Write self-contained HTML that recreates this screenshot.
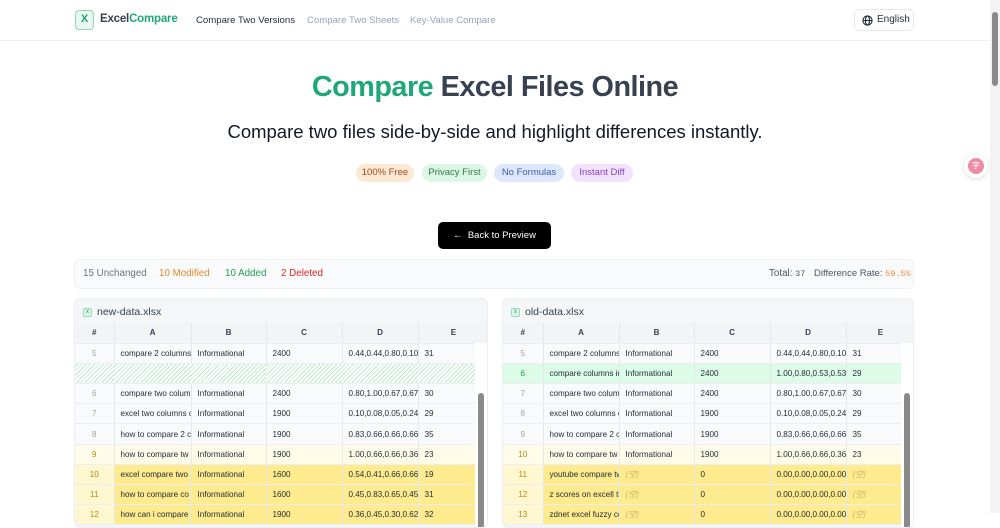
<!DOCTYPE html>
<html><head><meta charset="utf-8"><style>
*{box-sizing:border-box;margin:0;padding:0}
body{width:1000px;height:513px;overflow:hidden;background:#fff;font-family:"Liberation Sans",sans-serif;color:#1f2937;position:relative}
.hdr{position:absolute;left:0;top:0;width:990px;height:41px;border-bottom:1px solid #eef0f2}
.logo{position:absolute;left:75px;top:10px;width:19px;height:20px;border:1.5px solid #8fd5b8;border-radius:4px;background:#e9f8f1;color:#1f9d6f;font-size:11px;font-weight:bold;text-align:center;line-height:17px}
.brand{position:absolute;left:100px;top:13px;font-size:11.5px;font-weight:bold;color:#374151;letter-spacing:-0.2px}
.brand span{color:#1fa77a}
.nav{position:absolute;top:15px;font-size:9.6px;color:#94a3b8;white-space:nowrap}
.lang{position:absolute;left:854px;top:9px;width:60px;height:22px;border:1px solid #e5e7eb;border-radius:5px;font-size:10px;line-height:20px;padding-left:22px;color:#1f2937}
.h1{position:absolute;left:0;width:990px;top:71px;text-align:center;font-size:28.8px;font-weight:bold;color:#374151;letter-spacing:-0.5px}
.h1 span{color:#1fa77a}
.sub{position:absolute;left:0;width:990px;top:121px;text-align:center;font-size:18.5px;color:#111827}
.badge{position:absolute;top:164px;height:18px;border-radius:9px;font-size:9.5px;line-height:18px;text-align:center;white-space:nowrap}
.btn{position:absolute;left:438px;top:222px;width:113px;height:27px;background:#000;color:#fff;border-radius:5px;font-size:9.5px;line-height:27px;text-align:center}
.stats{position:absolute;left:74px;top:259px;width:840px;height:30px;background:#f9fafb;border:1px solid #f0f1f3;border-radius:5px;font-size:9.8px;line-height:28px}
.stats>span{white-space:nowrap}
.panel{position:absolute;top:298px;height:230px;background:#f5f6f8;border:1px solid #eceef1;border-radius:6px;overflow:hidden}
.ptitle{height:24px;font-size:10.5px;line-height:26px;padding-left:22px;color:#374151;position:relative}
.ptitle i{position:absolute;left:8px;top:9px;width:9px;height:9px;background:#dcf5e9;border:1px solid #9ad9bd;border-radius:2px;font-size:6px;line-height:7px;text-align:center;color:#1f9d6f;font-style:normal}
table{border-collapse:collapse;table-layout:fixed;font-size:8.1px}
td,th{height:20.2px;white-space:nowrap;overflow:hidden;border-right:1px solid #e5e7eb;border-bottom:1px solid #eceef1;padding-left:6px;text-align:left;font-weight:normal;color:#1f2937}
th{background:#f3f4f6;text-align:center;font-weight:bold;padding:0;color:#374151}
td.n{text-align:center;padding:0;color:#9ca3af}
tr.r td{background:#f9fafb}
tr.l td{background:#fefce9}tr.l td.n{color:#c2840c}
tr.y td{background:#fdeb8e}tr.y td.n{background:#fef7cf;color:#c2840c}
tr.g td{background:#dcfce7}tr.g td.n{color:#16a34a}
tr.h td{background:repeating-linear-gradient(135deg,#fff 0 2px,#bde8cf 2px 3px);border-right:none}
.em{color:#c9b56a;font-style:italic}
.sb{position:absolute;right:0;top:44px;width:12px;height:200px;background:#fff}
.sb div{position:absolute;left:3px;top:50px;width:6px;height:150px;background:#8a8a8a;border-radius:3px}
</style></head><body>
<div class="hdr">
<div class="logo">X</div>
<div class="brand">Excel<span>Compare</span></div>
<div class="nav" style="left:196px;color:#1f2937">Compare Two Versions</div>
<div class="nav" style="left:307px">Compare Two Sheets</div>
<div class="nav" style="left:410px">Key-Value Compare</div>
<div class="lang"><svg style="position:absolute;left:7px;top:5px" width="11" height="11" viewBox="0 0 12 12" fill="none" stroke="#1f2937" stroke-width="1.2"><circle cx="6" cy="6" r="5"/><ellipse cx="6" cy="6" rx="2.2" ry="5"/><path d="M1 6h10"/></svg>English</div>
</div>
<div class="h1"><span>Compare</span> Excel Files Online</div>
<div class="sub">Compare two files side-by-side and highlight differences instantly.</div>
<div class="badge" style="left:356px;width:58px;background:#fde8d4;color:#9a4a1c">100% Free</div>
<div class="badge" style="left:422px;width:65px;background:#dcf7e6;color:#2f7a4a">Privacy First</div>
<div class="badge" style="left:494px;width:70px;background:#dde8fc;color:#3b5bb0">No Formulas</div>
<div class="badge" style="left:571px;width:62px;background:#f1e2fd;color:#8b3fbf">Instant Diff</div>
<div class="btn">← &nbsp;Back to Preview</div>
<div class="stats">
<span style="position:absolute;left:8px;color:#6b7280">15 Unchanged</span>
<span style="position:absolute;left:84px;color:#e08a2c">10 Modified</span>
<span style="position:absolute;left:150px;color:#22a04e">10 Added</span>
<span style="position:absolute;left:206px;color:#dc2626">2 Deleted</span>
<span style="position:absolute;left:694px;color:#4b5563">Total: <span style="font-family:'Liberation Mono';font-size:8.5px">37</span></span>
<span style="position:absolute;left:739px;color:#4b5563;font-size:9.5px">Difference Rate: <span style="font-family:'Liberation Mono';font-size:8.5px;color:#f08a3c">59.5%</span></span>
</div>

<div class="panel" style="left:74px;width:414px">
<div class="ptitle"><i>x</i>new-data.xlsx</div>
<table style="width:414px"><colgroup><col style="width:39px"><col style="width:77px"><col style="width:75px"><col style="width:76px"><col style="width:76px"><col style="width:71px"></colgroup>
<tr><th>#</th><th>A</th><th>B</th><th>C</th><th>D</th><th>E</th></tr>
<tr class="r"><td class="n">5</td><td>compare 2 columns</td><td>Informational</td><td>2400</td><td>0.44,0.44,0.80,0.10,0</td><td>31</td></tr>
<tr class="h"><td></td><td></td><td></td><td></td><td></td><td></td></tr>
<tr class="r"><td class="n">6</td><td>compare two colum</td><td>Informational</td><td>2400</td><td>0.80,1.00,0.67,0.67,0</td><td>30</td></tr>
<tr class="r"><td class="n">7</td><td>excel two columns c</td><td>Informational</td><td>1900</td><td>0.10,0.08,0.05,0.24,0</td><td>29</td></tr>
<tr class="r"><td class="n">8</td><td>how to compare 2 c</td><td>Informational</td><td>1900</td><td>0.83,0.66,0.66,0.66,0</td><td>35</td></tr>
<tr class="l"><td class="n">9</td><td>how to compare tw</td><td>Informational</td><td>1900</td><td>1.00,0.66,0.66,0.36,0</td><td>23</td></tr>
<tr class="y"><td class="n">10</td><td>excel compare two</td><td>Informational</td><td>1600</td><td>0.54,0.41,0.66,0.66,1</td><td>19</td></tr>
<tr class="y"><td class="n">11</td><td>how to compare co</td><td>Informational</td><td>1600</td><td>0.45,0.83,0.65,0.45,1</td><td>31</td></tr>
<tr class="y"><td class="n">12</td><td>how can i compare</td><td>Informational</td><td>1900</td><td>0.36,0.45,0.30,0.62,0</td><td>32</td></tr>
</table>
<div class="sb"><div></div></div>
</div>

<div class="panel" style="left:502px;width:412px">
<div class="ptitle"><i>x</i>old-data.xlsx</div>
<table style="width:412px"><colgroup><col style="width:40px"><col style="width:76px"><col style="width:75px"><col style="width:76px"><col style="width:76px"><col style="width:69px"></colgroup>
<tr><th>#</th><th>A</th><th>B</th><th>C</th><th>D</th><th>E</th></tr>
<tr class="r"><td class="n">5</td><td>compare 2 columns</td><td>Informational</td><td>2400</td><td>0.44,0.44,0.80,0.10,0</td><td>31</td></tr>
<tr class="g"><td class="n">6</td><td>compare columns in</td><td>Informational</td><td>2400</td><td>1.00,0.80,0.53,0.53,0</td><td>29</td></tr>
<tr class="r"><td class="n">7</td><td>compare two colum</td><td>Informational</td><td>2400</td><td>0.80,1.00,0.67,0.67,0</td><td>30</td></tr>
<tr class="r"><td class="n">8</td><td>excel two columns c</td><td>Informational</td><td>1900</td><td>0.10,0.08,0.05,0.24,0</td><td>29</td></tr>
<tr class="r"><td class="n">9</td><td>how to compare 2 c</td><td>Informational</td><td>1900</td><td>0.83,0.66,0.66,0.66,0</td><td>35</td></tr>
<tr class="l"><td class="n">10</td><td>how to compare tw</td><td>Informational</td><td>1900</td><td>1.00,0.66,0.66,0.36,0</td><td>23</td></tr>
<tr class="y"><td class="n">11</td><td>youtube compare tw</td><td class="em">(空)</td><td>0</td><td>0.00,0.00,0.00,0.00,0</td><td class="em">(空)</td></tr>
<tr class="y"><td class="n">12</td><td>z scores on excell tu</td><td class="em">(空)</td><td>0</td><td>0.00,0.00,0.00,0.00,0</td><td class="em">(空)</td></tr>
<tr class="y"><td class="n">13</td><td>zdnet excel fuzzy cc</td><td class="em">(空)</td><td>0</td><td>0.00,0.00,0.00,0.00,0</td><td class="em">(空)</td></tr>
</table>
<div class="sb"><div></div></div>
</div>

<div style="position:absolute;left:990px;top:0;width:10px;height:513px;background:#f3f3f3"><div style="position:absolute;left:2px;top:12px;width:6px;height:74px;background:#8a8a8a;border-radius:3px"></div></div>
<div style="position:absolute;left:964px;top:154px;width:24px;height:24px;border-radius:12px;background:#fff;box-shadow:0 1px 4px rgba(0,0,0,.15)"><div style="position:absolute;left:4px;top:4px;width:16px;height:16px;border-radius:8px;background:#ef8aa3;color:#fff;font-size:8px;text-align:center;line-height:16px">字</div></div>
</body></html>
